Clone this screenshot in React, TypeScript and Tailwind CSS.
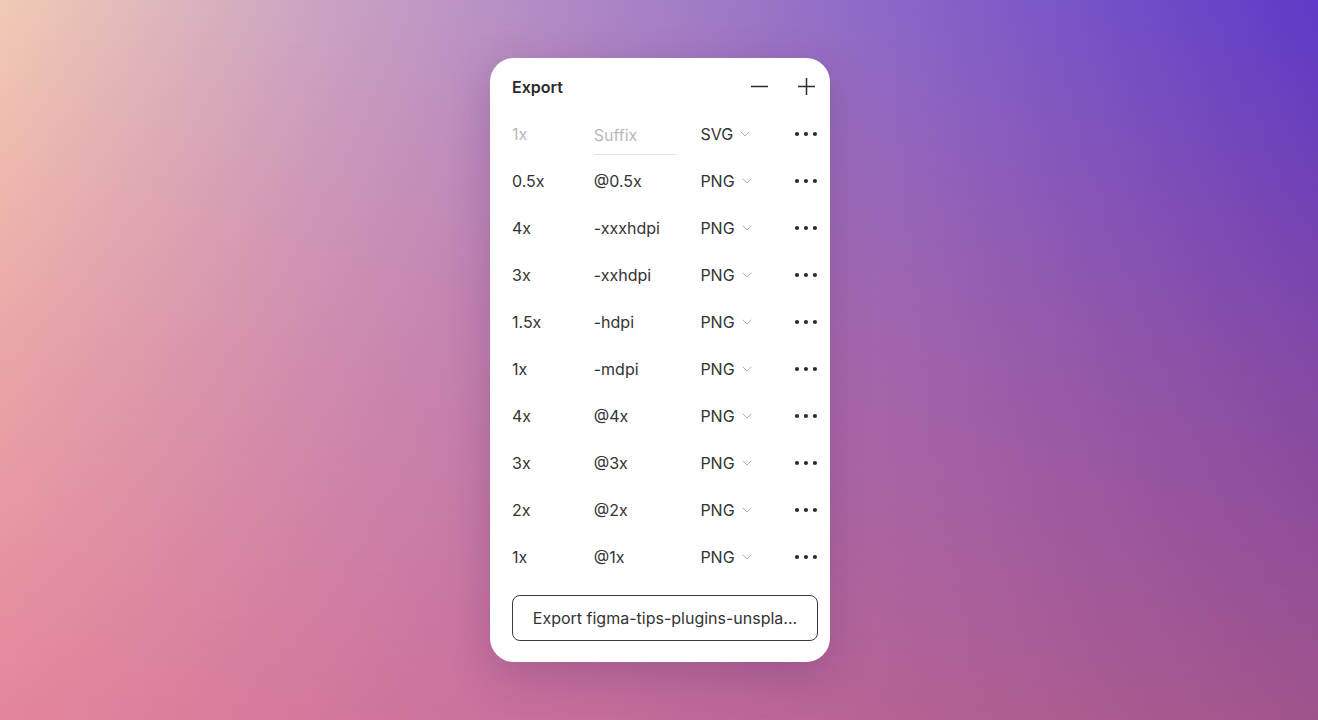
import { ChevronDown } from "lucide-react"

const rows = [
  { scale: "0.5x", suffix: "@0.5x" },
  { scale: "4x", suffix: "-xxxhdpi" },
  { scale: "3x", suffix: "-xxhdpi" },
  { scale: "1.5x", suffix: "-hdpi" },
  { scale: "1x", suffix: "-mdpi" },
  { scale: "4x", suffix: "@4x" },
  { scale: "3x", suffix: "@3x" },
  { scale: "2x", suffix: "@2x" },
  { scale: "1x", suffix: "@1x" },
]

function Dots() {
  return (
    <svg width="24" height="6" viewBox="0 0 24 6" className="text-[#2b2b2b]">
      <circle cx="3" cy="3" r="2.1" fill="currentColor" />
      <circle cx="12" cy="3" r="2.1" fill="currentColor" />
      <circle cx="21" cy="3" r="2.1" fill="currentColor" />
    </svg>
  )
}

function Format({ label }: { label: string }) {
  return (
    <div className="flex w-[94px] items-center gap-[4px]">
      <span>{label}</span>
      <ChevronDown size={16} strokeWidth={1.5} className="mt-[1px] text-[#b0b0b0]" />
    </div>
  )
}

export default function App() {
  return (
    <div
      className="grid h-[720px] w-full bg-[linear-gradient(to_right,#e4869c,#c86f9c_40%,#a0548b)]"
      style={{ fontFamily: "Inter, 'Noto Sans', sans-serif" }}
    >
      {/* top-row colours, faded down over the bottom-row gradient */}
      <div className="col-start-1 row-start-1 bg-[linear-gradient(to_right,#f1cab4,#c9a2c3_25%,#8764c8_70%,#5d3ac7)] [mask-image:linear-gradient(to_bottom,black,rgba(0,0,0,0.45)_50%,transparent)]" />
      <div className="relative z-10 col-start-1 row-start-1 flex items-start justify-center pl-[2px] pt-[58px]">
        <div className="flex w-[340px] flex-col rounded-[24px] bg-white pl-[22px] pr-[12px] pt-[5px] pb-[21px] text-[16px] text-[#333] shadow-[0_12px_40px_rgba(80,30,100,0.25)]">
          <div className="flex h-[47px] items-center justify-between">
            <span className="text-[16px] font-semibold text-[#2b2b2b]">Export</span>
            <div className="flex items-center gap-[30px] pr-[3px] text-[#2b2b2b]">
              <svg width="17" height="17" viewBox="0 0 17 17" fill="none" stroke="currentColor" strokeWidth="1.5">
                <path d="M0 8.5h17" />
              </svg>
              <svg width="17" height="17" viewBox="0 0 17 17" fill="none" stroke="currentColor" strokeWidth="1.5">
                <path d="M0 8.5h17M8.5 0v17" />
              </svg>
            </div>
          </div>

          <div className="flex h-[47px] items-center">
            <span className="w-[82px] text-[#b8b8b8]">1x</span>
            <div className="mr-[23px] flex h-[43px] w-[84px] items-center border-b border-[#e3e3e3] pt-[3px] text-[#b8b8b8]">
              Suffix
            </div>
            <Format label="SVG" />
            <Dots />
          </div>

          {rows.map((r, i) => (
            <div key={i} className="flex h-[47px] items-center">
              <span className="w-[82px]">{r.scale}</span>
              <span className="w-[107px]">{r.suffix}</span>
              <Format label="PNG" />
              <Dots />
            </div>
          ))}

          <button className="mt-[15px] h-[46px] w-[306px] rounded-[8px] border-[1.5px] border-[#3a3a3a] text-[16px] text-[#333]">
            Export figma-tips-plugins-unspla...
          </button>
        </div>
      </div>
    </div>
  )
}
